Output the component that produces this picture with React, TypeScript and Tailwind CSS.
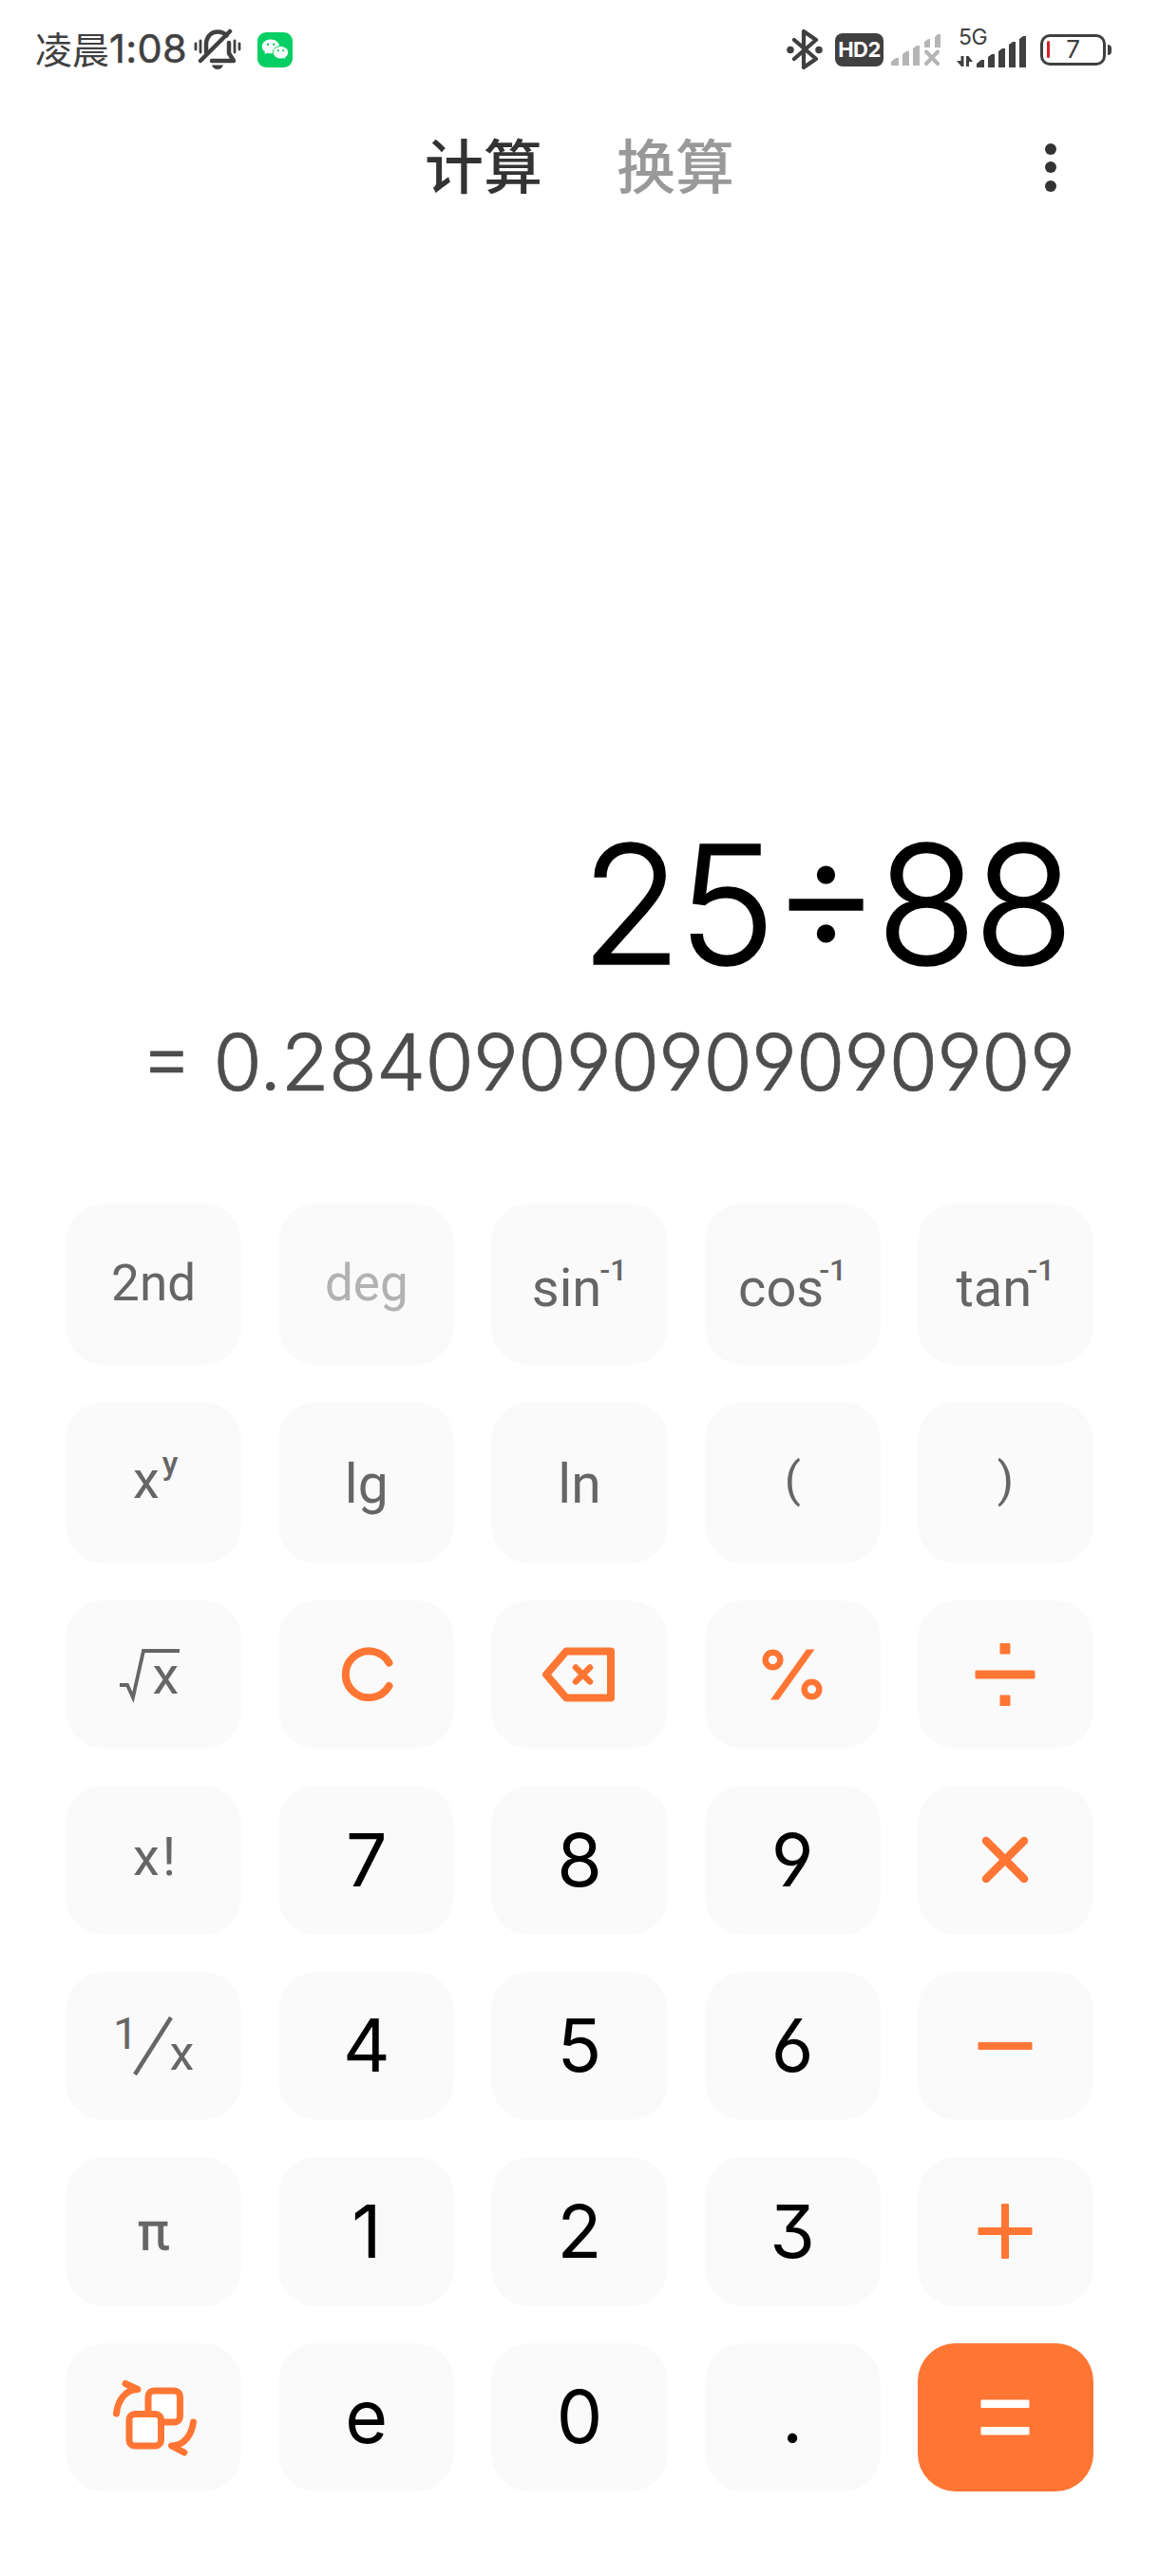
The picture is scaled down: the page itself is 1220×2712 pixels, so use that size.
import type { ReactNode } from "react";
import clsx from "clsx";

const INTER = "font-['Inter','Noto_Sans_CJK_SC',sans-serif]";
const ROBOTO = "font-['Roboto','Noto_Sans_CJK_SC',sans-serif]";
// open 6 and 9, flat-topped 3, operators raised to digit height
const DIGITS = "[font-feature-settings:'cv03','cv04','cv09','case']";

function BellOffIcon() {
  return (
    <svg className="w-[50px] h-[44px]" viewBox="0 0 50 44" fill="none" stroke="#404040" strokeWidth="4.500" strokeLinecap="round">
      <path d="M13 25V17C13 9 18 3.500 25 3.500c4 0 7.500 1.500 9.500 4" />
      <path d="M37 15v11l5 8H19" strokeLinejoin="round" />
      <path d="M38 3 7 34" />
      <path d="M19 38.500h12c-1 3-3.500 4.500-6 4.500s-5-1.500-6-4.500z" fill="#404040" stroke="none" />
      <path d="M2 16v6M7 13v12M43 13v12M48 16v6" strokeWidth="2.800" />
    </svg>
  );
}

function WechatIcon() {
  return (
    <svg className="w-[37px] h-[37px]" viewBox="0 0 37 37">
      <rect width="37" height="37" rx="9" fill="#07cf63" />
      <path d="M14 7.500c-5.200 0-9.200 3.300-9.200 7.400 0 2.400 1.300 4.400 3.400 5.800l-.8 2.600 3-1.500c1.100.3 2.300.5 3.600.5 5.100 0 9.200-3.300 9.200-7.400S19.100 7.500 14 7.500z" fill="#fff" />
      <path d="M24.500 14.600c-4.600 0-8.200 3-8.200 6.700s3.600 6.700 8.200 6.700c1 0 2-.1 2.900-.4l2.600 1.300-.7-2.200c2-1.300 3.300-3.200 3.300-5.400 0-3.700-3.600-6.700-8.100-6.700z" fill="#fff" stroke="#07cf63" strokeWidth="1" />
      <g fill="#07cf63">
        <circle cx="11" cy="12.800" r="1.200" />
        <circle cx="17.200" cy="12.800" r="1.200" />
        <circle cx="21.800" cy="19.200" r="1.100" />
        <circle cx="27.200" cy="19.200" r="1.100" />
      </g>
    </svg>
  );
}

function BluetoothIcon() {
  return (
    <svg className="w-[38px] h-[42px]" viewBox="0 0 38 42">
      <path d="M8 11 31 31 18 40V2l13 9L8 31" fill="none" stroke="#404040" strokeWidth="4.200" strokeLinejoin="round" strokeLinecap="round" />
      <circle cx="4" cy="21.500" r="3.800" fill="#404040" />
      <circle cx="34" cy="21.500" r="3.800" fill="#404040" />
    </svg>
  );
}

function NoSignalIcon() {
  return (
    <svg className="w-[52px] h-[33px]" viewBox="0 0 52 33" fill="#b5b5b5">
      <path d="M0 33v-4l5-4h3v8zM12 33V21l4-3h3v15zM23 33V15l4-3h3v21zM35 14V8l4-3h2v9zM46 14V3l3-3h3v14z" />
      <path d="m37 18.500 12 12.500M49 18.500 37 31" stroke="#b5b5b5" strokeWidth="4" strokeLinecap="round" />
    </svg>
  );
}

function SignalIcon() {
  return (
    <svg className="absolute left-0 bottom-0 w-[73px] h-[33px]" viewBox="0 0 73 33" fill="#404040">
      <path d="M21 33v-4l5-4h3v8zM33 33V22l4-3h3v14zM44 33V16l4-3h3v20zM55 33V9l4-3h3v27zM66 33V3l4-3h3v33z" />
      <path d="M4.500 21h3v11H5L0 26h4.500zM10 21h2.500l4.500 6h-4v5h-3z" />
    </svg>
  );
}

function StatusBar() {
  return (
    <div className="flex h-[104px] shrink-0 items-center justify-between pl-[37px] pr-[50px] text-[#404040]">
      <div className="flex items-center">
        <span className={clsx(INTER, "flex w-[160px] items-center whitespace-nowrap text-[41.5px] leading-none")}>
          <span className="text-[39px]">凌晨</span>
          <span className="tracking-[0.3px] [-webkit-text-stroke:0.5px_#404040]">1:08</span>
        </span>
        <span className="ml-[7px] flex">
          <BellOffIcon />
        </span>
        <span className="ml-[17px] flex">
          <WechatIcon />
        </span>
      </div>
      <div className="flex items-center">
        <BluetoothIcon />
        <span className={clsx(INTER, "ml-[13px] flex h-[35px] w-[51px] items-center justify-center rounded-[8px] bg-[#404040] text-[22px] leading-none font-bold tracking-[-0.5px] text-white")}>
          HD2
        </span>
        <span className="ml-[8px] flex">
          <NoSignalIcon />
        </span>
        <span className="relative ml-[17px] h-[38px] w-[73px]">
          <span className={clsx(INTER, "absolute -top-[5px] left-[2px] text-[23px] leading-none tracking-[-0.5px]")}>5G</span>
          <SignalIcon />
        </span>
        <span className={clsx(INTER, "relative ml-[15px] flex h-[33px] w-[69px] items-center justify-center rounded-[10px] border-[3.5px] border-[#404040] text-[26px] leading-none")}>
          <span className="absolute left-[4px] top-[4px] h-[18px] w-[3px] rounded-sm bg-[#d3202a]" />7
        </span>
        <span className="ml-[2px] h-[11px] w-[4px] rounded-r-sm bg-[#404040]" />
      </div>
    </div>
  );
}

function Header() {
  return (
    <div className="grid h-[144px] shrink-0 grid-cols-[1fr_auto_1fr] items-center pr-[108px] pl-[108px] font-['Noto_Sans_CJK_SC',sans-serif] text-[62px] leading-none font-medium">
      <span />
      <div className="flex gap-[78px] pb-[8px]">
        <span className="text-[#333333]">计算</span>
        <span className="text-[#999999]">换算</span>
      </div>
      <div className="flex flex-col items-end gap-[7.5px]">
        <span className="h-[12px] w-[12px] rounded-full bg-[#333333]" />
        <span className="h-[12px] w-[12px] rounded-full bg-[#333333]" />
        <span className="h-[12px] w-[12px] rounded-full bg-[#333333]" />
      </div>
    </div>
  );
}

function Icon({ children, color = "#ff7634" }: { children: ReactNode; color?: string }) {
  return (
    <svg className="h-[100px] w-[100px]" viewBox="-50 -50 100 100" fill="none" stroke={color} strokeWidth="8" strokeLinecap="round" strokeLinejoin="round">
      {children}
    </svg>
  );
}

function Inverse({ name }: { name: string }) {
  return (
    <span className="flex items-baseline pt-[9px] text-[56px]">
      {name}
      <span className={clsx("-translate-y-[27px] text-[32px] font-medium", name === "sin" ? "-ml-[2px]" : "-ml-[5px]")}>-1</span>
    </span>
  );
}

type Key = { id: string; label: ReactNode; className?: string };

const num = (value: string): Key => ({
  id: value,
  label: value,
  className: clsx(INTER, DIGITS, "text-[77px] text-black"),
});

const keys: Key[] = [
  { id: "2nd", label: "2nd" },
  { id: "deg", label: "deg", className: "text-[#b2b2b2]" },
  { id: "asin", label: <Inverse name="sin" /> },
  { id: "acos", label: <Inverse name="cos" /> },
  { id: "atan", label: <Inverse name="tan" /> },
  {
    id: "pow",
    label: (
      <span className="flex items-baseline pb-[5px] pl-[4px] text-[56px]">
        x<span className="ml-[3px] -translate-y-[25px] text-[34px] font-medium">y</span>
      </span>
    ),
  },
  { id: "lg", label: "lg", className: "text-[57px] pt-[4px]" },
  { id: "ln", label: "ln", className: "text-[57px] pt-[4px]" },
  { id: "(", label: "(", className: "text-[50px] pb-[6px]" },
  { id: ")", label: ")", className: "text-[50px] pb-[6px]" },
  {
    id: "sqrt",
    label: (
      <span className="relative flex h-[100px] w-[100px] justify-center">
        <Icon color="#666666">
          <path d="M-36 11h8l6 13L-11-25h38" strokeWidth="3.800" strokeLinecap="butt" strokeLinejoin="miter" />
        </Icon>
        <span className="absolute top-[23px] left-[49px] text-[56px]">x</span>
      </span>
    ),
  },
  { id: "clear", label: <Icon><path d="M23.500-12.500A24.500 24.500 0 1 0 23.500 12" /></Icon> },
  {
    id: "back",
    label: (
      <Icon>
        <path d="M-14-24.500h47v49h-47L-35 0z" />
        <path d="M-4-7.500 11 7.500M11-7.500-4 7.500" strokeWidth="6.500" />
      </Icon>
    ),
  },
  {
    id: "%",
    label: (
      <Icon>
        <circle cx="-20.500" cy="-15.500" r="7.800" strokeWidth="6.500" />
        <circle cx="20.500" cy="15.500" r="7.800" strokeWidth="6.500" />
        <path d="M15-26.500h8.500L-14.500 26.500H-23z" fill="#ff7634" stroke="none" />
      </Icon>
    ),
  },
  {
    id: "div",
    label: (
      <Icon>
        <g fill="#ff7634" stroke="none">
          <rect x="-31.500" y="-4.500" width="63" height="9" rx="1.500" />
          <rect x="-5.500" y="-33" width="11" height="11.500" rx="1" />
          <rect x="-5.500" y="21.500" width="11" height="11.500" rx="1" />
        </g>
      </Icon>
    ),
  },
  { id: "fact", label: <span className="flex gap-[3px] pb-[6px] pl-[2px] text-[56px]">x<span>!</span></span> },
  num("7"),
  num("8"),
  num("9"),
  { id: "mul", label: <Icon><path d="m-20-20 40 40M20-20-20 20" strokeWidth="8.500" /></Icon> },
  {
    id: "inv",
    label: (
      <span className="flex items-center">
        <span className="-mr-[5px] pb-[26px] text-[47px]">1</span>
        <svg className="h-[62px] w-[42px]" viewBox="0 0 42 62">
          <path d="M2 61 40 1" stroke="#666666" strokeWidth="4.500" />
        </svg>
        <span className="-ml-[4px] pt-[17px] text-[52px]">x</span>
      </span>
    ),
  },
  num("4"),
  num("5"),
  num("6"),
  { id: "sub", label: <Icon><rect x="-28.500" y="-4" width="57" height="8" rx="1" fill="#ff7634" stroke="none" /></Icon> },
  { id: "pi", label: "π", className: "text-[56px] [-webkit-text-stroke:0.6px_#666666]" },
  num("1"),
  num("2"),
  num("3"),
  {
    id: "add",
    label: (
      <Icon>
        <g fill="#ff7634" stroke="none">
          <rect x="-28.500" y="-4" width="57" height="8" rx="1" />
          <rect x="-4" y="-29" width="8" height="58" rx="1" />
        </g>
      </Icon>
    ),
  },
  {
    id: "swap",
    label: (
      <Icon>
        <g strokeWidth="7">
          <path d="M-6-3v-19a6 6 0 0 1 6-6h21.500a6 6 0 0 1 6 6V-1a6 6 0 0 1-6 6H11" fill="#fff" />
          <rect x="-26" y="-3.500" width="33.500" height="33.500" rx="6" fill="#fff" />
          <path d="M-39.500-4C-38-17-31-29-17-29.500L-30-35.500" />
          <path d="M41.500 5C40 17 33 29.500 18.500 30L32 37" />
        </g>
      </Icon>
    ),
  },
  num("e"),
  num("0"),
  num("."),
  {
    id: "eq",
    label: (
      <Icon>
        <g fill="#fff" stroke="none">
          <rect x="-25.500" y="-18.500" width="51" height="8.500" rx="1" />
          <rect x="-25.500" y="10" width="51" height="8.500" rx="1" />
        </g>
      </Icon>
    ),
    className: "bg-[#ff7634]",
  },
];

function Keypad() {
  return (
    <div className={clsx(ROBOTO, "grid grid-cols-5 grid-rows-[170px_170px_repeat(5,156.5px)] gap-[39px] px-[69px] pb-[89px]")}>
      {keys.map(({ id, label, className }) => (
        <button
          key={id}
          className={clsx(
            "flex min-w-0 items-center justify-center rounded-[40px] leading-none",
            !className?.includes("bg-") && "bg-[#fafafa]",
            !className?.includes("text-[#") && !className?.includes("text-black") && "text-[#666666]",
            !className?.includes("px]") && "text-[53px]",
            className
          )}
        >
          {label}
        </button>
      ))}
    </div>
  );
}

export default function App() {
  return (
    <div className="flex h-[2712px] w-[1220px] flex-col overflow-hidden bg-white">
      <StatusBar />
      <Header />
      <div className={clsx(INTER, DIGITS, "flex flex-1 flex-col items-end justify-end gap-[16px] pb-[98.5px] pr-[89px] font-light whitespace-nowrap")}>
        <span className="mr-[4px] text-[173px] leading-[200px] tracking-[-3.5px] text-black [-webkit-text-stroke:1.5px_#000]">25÷88</span>
        <span className="text-[83px] leading-[100px] tracking-[-0.7px] text-[#4d4d4d] [-webkit-text-stroke:0.7px_#4d4d4d]">= 0.28409090909090909</span>
      </div>
      <Keypad />
    </div>
  );
}
